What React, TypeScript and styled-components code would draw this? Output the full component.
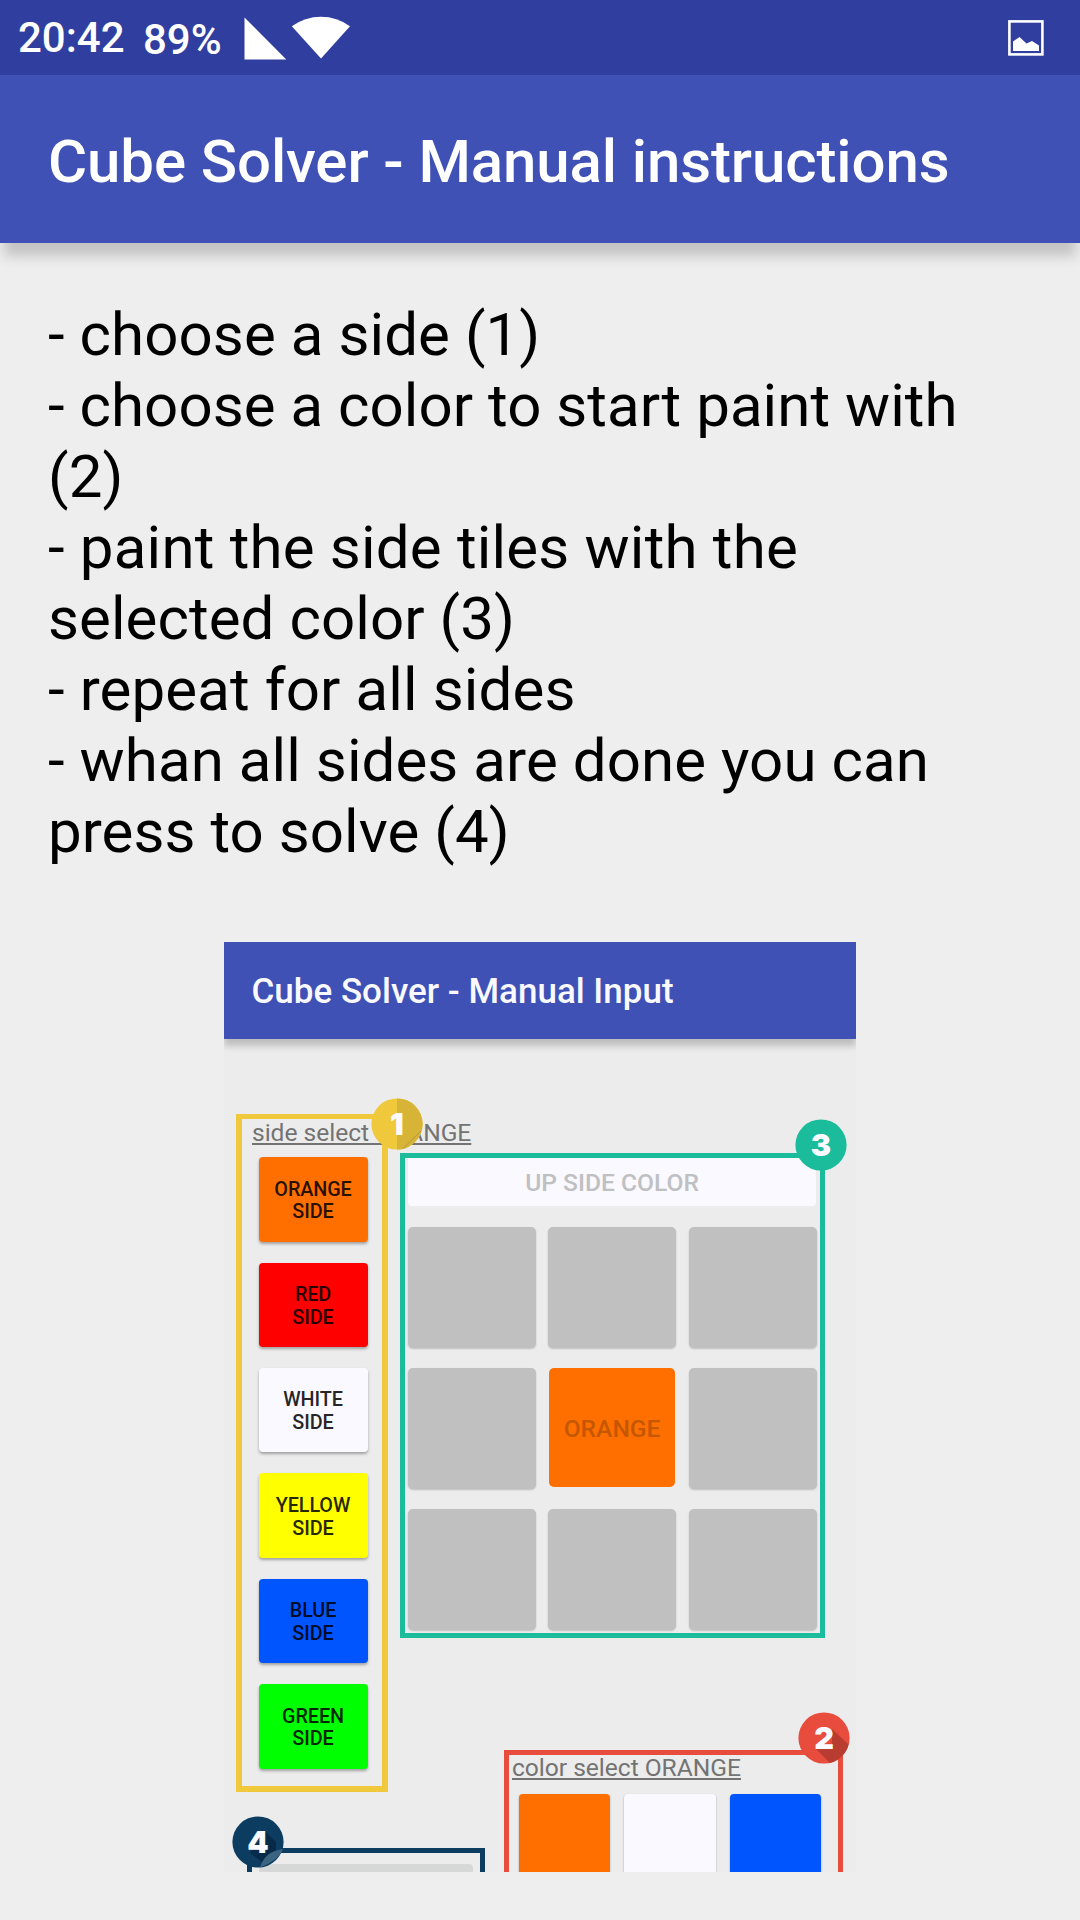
import React from "react";
import styled, { createGlobalStyle } from "styled-components";

const GlobalStyle = createGlobalStyle`
  * { box-sizing: border-box; }
  body { margin: 0; background: #eeeeee; font-family: Roboto, sans-serif; }
`;

const Screen = styled.div`
  width: 1080px;
  height: 1920px;
  overflow: hidden;
  display: flex;
  flex-direction: column;
  background: #eeeeee;
`;

const StatusBar = styled.div`
  height: 75px;
  flex: none;
  display: flex;
  align-items: center;
  padding: 0 36px 0 18px;
  background: #303e9f;
  color: #fff;
  font-weight: 500;
`;

const Clock = styled.span`
  font-size: 42px;
  line-height: 49px;
  width: 125px;
`;

const Battery = styled.span`
  font-size: 42px;
  line-height: 48px;
  width: 100px;
  padding-top: 4px;
`;

const SignalIcons = styled.svg`
  width: 110px;
  height: 48px;
  flex: none;
`;

const PictureIcon = styled.svg`
  width: 36px;
  height: 36px;
  margin-left: auto;
`;

const AppBar = styled.header`
  height: 168px;
  flex: none;
  display: flex;
  align-items: center;
  padding: 6px 48px 0;
  background: #3f51b5;
  box-shadow: 0 17px 12px -4px rgba(0, 0, 0, 0.18);
`;

const Title = styled.h1`
  margin: 0;
  color: #fff;
  font-size: 60px;
  font-weight: 500;
  line-height: 70px;
  letter-spacing: -0.11px;
  white-space: nowrap;
`;

const Instructions = styled.div`
  margin: 56px 48px 0;
  color: #000;
  font-size: 60px;
  line-height: 71px;
`;

const Line = styled.div<{ $tracking: number }>`
  letter-spacing: ${(p) => p.$tracking}px;
  white-space: nowrap;
`;

const Preview = styled.div`
  width: 632px;
  height: 930px;
  margin: 75px auto 0;
  flex: none;
  overflow: hidden;
  background: #ececec;
`;

const PreviewBar = styled.div`
  height: 97px;
  display: flex;
  align-items: center;
  padding: 2px 27.5px 0;
  background: #3f51b5;
  color: #f9f9ff;
  font-size: 35px;
  font-weight: 500;
  box-shadow: 0 7px 7px 0 rgba(0, 0, 0, 0.2);
`;

const PreviewBody = styled.div`
  display: grid;
  grid-template-columns: 152px 1fr;
  column-gap: 12px;
  padding: 75px 0 0 12px;
`;

const LeftColumn = styled.div`
  display: flex;
  flex-direction: column;
`;

const RightColumn = styled.div`
  display: flex;
  flex-direction: column;
  padding-top: 39px;
`;

const Marked = styled.section<{ $color: string }>`
  position: relative;
  flex: none;
  border: 5px solid ${(p) => p.$color};
`;

const SideSection = styled(Marked)`
  width: 152px;
  height: 678px;
  border-left-width: 6px;
  border-right-width: 6px;
  border-bottom-width: 6px;
  padding-left: 10px;
`;

const TileSection = styled(Marked)`
  width: 425px;
  height: 485px;
  padding: 0 2.5px;
`;

const ColorSection = styled(Marked)`
  width: 339px;
  height: 200px;
  margin: 112px 0 0 104px;
  padding-left: 3px;
`;

const SolveSection = styled(Marked)`
  width: 238px;
  height: 100px;
  margin: 56px 0 0 11px;
  padding: 11px 7px 0 7px;
`;

const Label = styled.div<{ $raise?: number }>`
  width: max-content;
  margin-top: ${(p) => -(p.$raise ?? 0)}px;
  color: #737373;
  font-size: 24.6px;
  line-height: 28px;
  letter-spacing: -0.03px;
  text-decoration: underline;
  text-decoration-thickness: 2px;
  text-underline-offset: 2px;
  text-decoration-skip-ink: none;
  white-space: nowrap;
`;

const SideList = styled.div`
  display: flex;
  flex-direction: column;
  gap: 21px;
  padding: 10.3px 0 0 6.5px;
`;

const SideButton = styled.div<{ $color: string }>`
  width: 109px;
  height: 84.4px;
  padding: 4px 12px 0;
  display: flex;
  align-items: center;
  text-align: center;
  justify-content: center;
  border-radius: 4px;
  background: ${(p) => p.$color};
  color: rgba(0, 0, 0, 0.87);
  font-size: 19.8px;
  font-weight: 500;
  line-height: 22.8px;
  letter-spacing: -0.1px;
  box-shadow: 0 2px 3px rgba(0, 0, 0, 0.32);
`;

const UpSide = styled.div`
  width: 408px;
  height: 48px;
  display: flex;
  align-items: center;
  justify-content: center;
  padding-left: 1px;
  border-radius: 0 0 4px 4px;
  background: #f9f9ff;
  color: #bfc0c2;
  font-size: 24.6px;
  font-weight: 500;
`;

const TileGrid = styled.div`
  display: grid;
  grid-template-columns: repeat(3, 128px);
  grid-auto-rows: 121px;
  gap: 19.8px 12.9px;
  margin-top: 21px;
`;

const Tile = styled.div<{ $center?: boolean }>`
  display: flex;
  align-items: center;
  justify-content: center;
  border-radius: 5px;
  background: ${(p) => (p.$center ? "#ff6f00" : "#c0c0c0")};
  margin: ${(p) => (p.$center ? "0 1px 1.4px 0.4px" : "0")};
  padding-top: 2px;
  color: #c45700;
  font-size: 24.6px;
  font-weight: 500;
  box-shadow: ${(p) => (p.$center ? "none" : "0 1px 2px rgba(0, 0, 0, 0.2)")};
`;

const Swatches = styled.div`
  display: flex;
  gap: 14.2px;
  padding: 11.6px 0 0 7px;
`;

const Swatch = styled.div<{ $color: string }>`
  width: 91.3px;
  height: 120px;
  border-radius: 4px;
  background: ${(p) => p.$color};
  box-shadow: 0 1px 2px rgba(0, 0, 0, 0.35);
`;

const SolveButton = styled.div`
  height: 60px;
  border-radius: 4px;
  background: #d6d7d7;
`;

const BadgeSvg = styled.svg<{ $x: number; $y: number }>`
  position: absolute;
  left: ${(p) => p.$x}px;
  top: ${(p) => p.$y}px;
  width: 52px;
  height: 52px;
  overflow: visible;
  z-index: 1;
`;

const Digit = styled.text`
  fill: #f9f9ff;
  font-family: Inter, sans-serif;
  font-size: 30.5px;
  font-weight: 900;
  text-anchor: middle;
`;

type BadgeProps = {
  x: number;
  y: number;
  color: string;
  digit: string;
  children?: React.ReactNode;
};

const Badge = ({ x, y, color, digit, children }: BadgeProps) => (
  <BadgeSvg $x={x} $y={y} viewBox="0 0 52 52">
    <circle cx="26" cy="26" r="25.6" fill={color} />
    {children}
    <Digit x="26" y="37">{digit}</Digit>
  </BadgeSvg>
);

const lines = [
  { text: "- choose a side (1)", tracking: 0.08 },
  { text: "- choose a color to start paint with", tracking: 0.05 },
  { text: "(2)", tracking: 0.1 },
  { text: "- paint the side tiles with the", tracking: 0.2 },
  { text: "selected color (3)", tracking: 0.08 },
  { text: "- repeat for all sides", tracking: 0.12 },
  { text: "- whan all sides are done you can", tracking: 0.08 },
  { text: "press to solve (4)", tracking: 0.06 },
];

const sides = [
  { name: "ORANGE", color: "#ff6f00" },
  { name: "RED", color: "#ff0000" },
  { name: "WHITE", color: "#f9f9ff" },
  { name: "YELLOW", color: "#ffff00" },
  { name: "BLUE", color: "#0055ff" },
  { name: "GREEN", color: "#00ff00" },
];

const swatches = ["#ff6f00", "#f9f9ff", "#0055ff"];

export default function App() {
  return (
    <>
      <GlobalStyle />
      <Screen>
        <StatusBar>
          <Clock>20:42</Clock>
          <Battery>89%</Battery>
          <SignalIcons viewBox="0 0 110 48" fill="#fff">
            <path d="M1.5 3.5V45.5H43.3Z" />
            <path d="M78 44.6L48.8 12.2Q62 2.7 78 2.7T107 12.2Z" />
          </SignalIcons>
          <PictureIcon viewBox="0 0 36 36">
            <rect x="1.4" y="1.4" width="33" height="33" fill="none" stroke="#fff" strokeWidth="2.6" />
            <path d="M5 21.5L11.5 17L18.5 23.5L24 21L31 25.5V31H5Z" fill="#fff" />
          </PictureIcon>
        </StatusBar>
        <AppBar>
          <Title>Cube Solver - Manual instructions</Title>
        </AppBar>
        <Instructions>
          {lines.map((line) => (
            <Line key={line.text} $tracking={line.tracking}>
              {line.text}
            </Line>
          ))}
        </Instructions>
        <Preview>
          <PreviewBar>Cube Solver - Manual Input</PreviewBar>
          <PreviewBody>
            <LeftColumn>
              <SideSection $color="#f0c83c">
                <Label>side select ORANGE</Label>
                <SideList>
                  {sides.map((side) => (
                    <SideButton key={side.name} $color={side.color}>
                      {side.name}
                      <br />
                      SIDE
                    </SideButton>
                  ))}
                </SideList>
                <Badge x={128.5} y={-21} color="#f0c83c" digit="1">
                  <path d="M26 .4A25.6 25.6 0 0 1 26 51.6Z" fill="#d7b336" />
                  <path d="M50 33L32 50.5" stroke="#a9924a" strokeWidth="0.8" />
                </Badge>
              </SideSection>
              <SolveSection $color="#0c3c60">
                <SolveButton />
                <Badge x={-20.5} y={-37} color="#0c3c60" digit="4">
                  <path d="M34 16L44 26L44 34L30 46L18 37Z" fill="#072a49" />
                  <path d="M51 33Q47 44 28 51.6Q31 42 37 38T51 33Z" fill="#3a6480" />
                </Badge>
              </SolveSection>
            </LeftColumn>
            <RightColumn>
              <TileSection $color="#1bbc9b">
                <UpSide>UP SIDE COLOR</UpSide>
                <TileGrid>
                  {Array.from({ length: 9 }, (_, i) => (
                    <Tile key={i} $center={i === 4}>
                      {i === 4 ? "ORANGE" : null}
                    </Tile>
                  ))}
                </TileGrid>
                <Badge x={390} y={-39} color="#1bbc9b" digit="3" />
              </TileSection>
              <ColorSection $color="#e84c3d">
                <Label $raise={1}>color select ORANGE</Label>
                <Swatches>
                  {swatches.map((color) => (
                    <Swatch key={color} $color={color} />
                  ))}
                </Swatches>
                <Badge x={289.3} y={-43} color="#e84c3d" digit="2">
                  <path d="M34 17L50.6 32.5A25.6 25.6 0 0 1 32 51L18 37L34 36Z" fill="#b93c31" />
                </Badge>
              </ColorSection>
            </RightColumn>
          </PreviewBody>
        </Preview>
      </Screen>
    </>
  );
}
